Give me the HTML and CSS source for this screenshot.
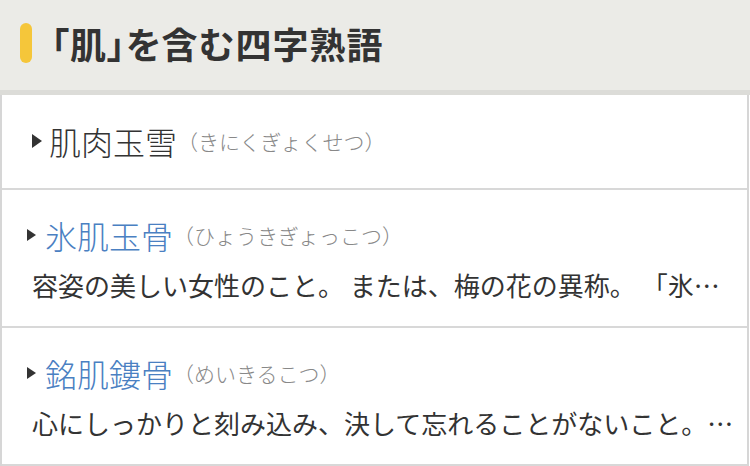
FILE: index.html
```html
<!DOCTYPE html>
<html lang="ja">
<head>
  <meta charset="UTF-8">
  <meta name="viewport" content="width=device-width, initial-scale=1.0">
  <title>「肌」を含む四字熟語</title>
  <link rel="stylesheet" href="styles.css">
</head>
<body>

  <div class="section-head">
    <span class="head-bar"></span>
    <h2>「肌」を含む四字熟語</h2>
  </div>

  <ul class="word-list">
    <li class="word-item first">
      <div class="word-title">
        <span class="arrow"></span>
        <span class="word plain">肌肉玉雪</span>
        <span class="yomi">（きにくぎょくせつ）</span>
      </div>
    </li>
    <li class="word-item">
      <div class="word-title">
        <span class="arrow small"></span>
        <a href="#" class="word">氷肌玉骨</a>
        <span class="yomi">（ひょうきぎょっこつ）</span>
      </div>
      <p class="desc">容姿の美しい女性のこと。 または、梅の花の異称。 「氷…</p>
    </li>
    <li class="word-item">
      <div class="word-title">
        <span class="arrow small"></span>
        <a href="#" class="word">銘肌鏤骨</a>
        <span class="yomi">（めいきるこつ）</span>
      </div>
      <p class="desc">心にしっかりと刻み込み、決して忘れることがないこと。…</p>
    </li>
  </ul>

</body>
</html>
```

FILE: styles.css
```css
body {
  margin: 0;
  font-family: "Noto Sans CJK JP", "Noto Sans", sans-serif;
  color: #333;
  background-color: #fff;
}

.section-head {
  display: flex;
  align-items: center;
  height: 90px;
  padding-left: 20px;
  background-color: #ebebe7;
  border-bottom: 5px solid #dcdcd8;
}

.head-bar {
  width: 12px;
  height: 40px;
  border-radius: 6px;
  background-color: #f5c63a;
  margin-right: 19px;
  margin-top: -4px;
}

.section-head h2 {
  margin: 0;
  font-size: 36px;
  font-weight: bold;
  letter-spacing: 1px;
  font-feature-settings: "palt";
  line-height: 1;
  margin-top: -4px;
}

.word-list {
  list-style: none;
  margin: 0 1px 0 0;
  padding: 0;
  border-left: 2px solid #d6d6d6;
  border-right: 2px solid #d6d6d6;
}

.word-item {
  padding: 24px 10px 23px 25px;
  border-bottom: 2px solid #d8d8d8;
}

.word-item.first {
  padding: 25px 10px 26px 30px;
}

.word-title {
  display: flex;
  align-items: center;
  height: 42px;
}

.arrow {
  width: 0;
  height: 0;
  border-left: 10px solid #333;
  border-top: 7px solid transparent;
  border-bottom: 7px solid transparent;
  margin-right: 7px;
}

.arrow.small {
  border-left-width: 9px;
  border-top-width: 6px;
  border-bottom-width: 6px;
  margin-right: 9px;
}

.word {
  font-size: 32px;
  font-weight: 300;
  color: #4a80c2;
  text-decoration: none;
}

.word.plain {
  color: #333;
}

.yomi {
  font-size: 21px;
  color: #888;
  font-weight: 300;
}

.desc {
  margin: 11px 0 0 5px;
  font-size: 26px;
  line-height: 36px;
  white-space: nowrap;
  overflow: hidden;
}
```
